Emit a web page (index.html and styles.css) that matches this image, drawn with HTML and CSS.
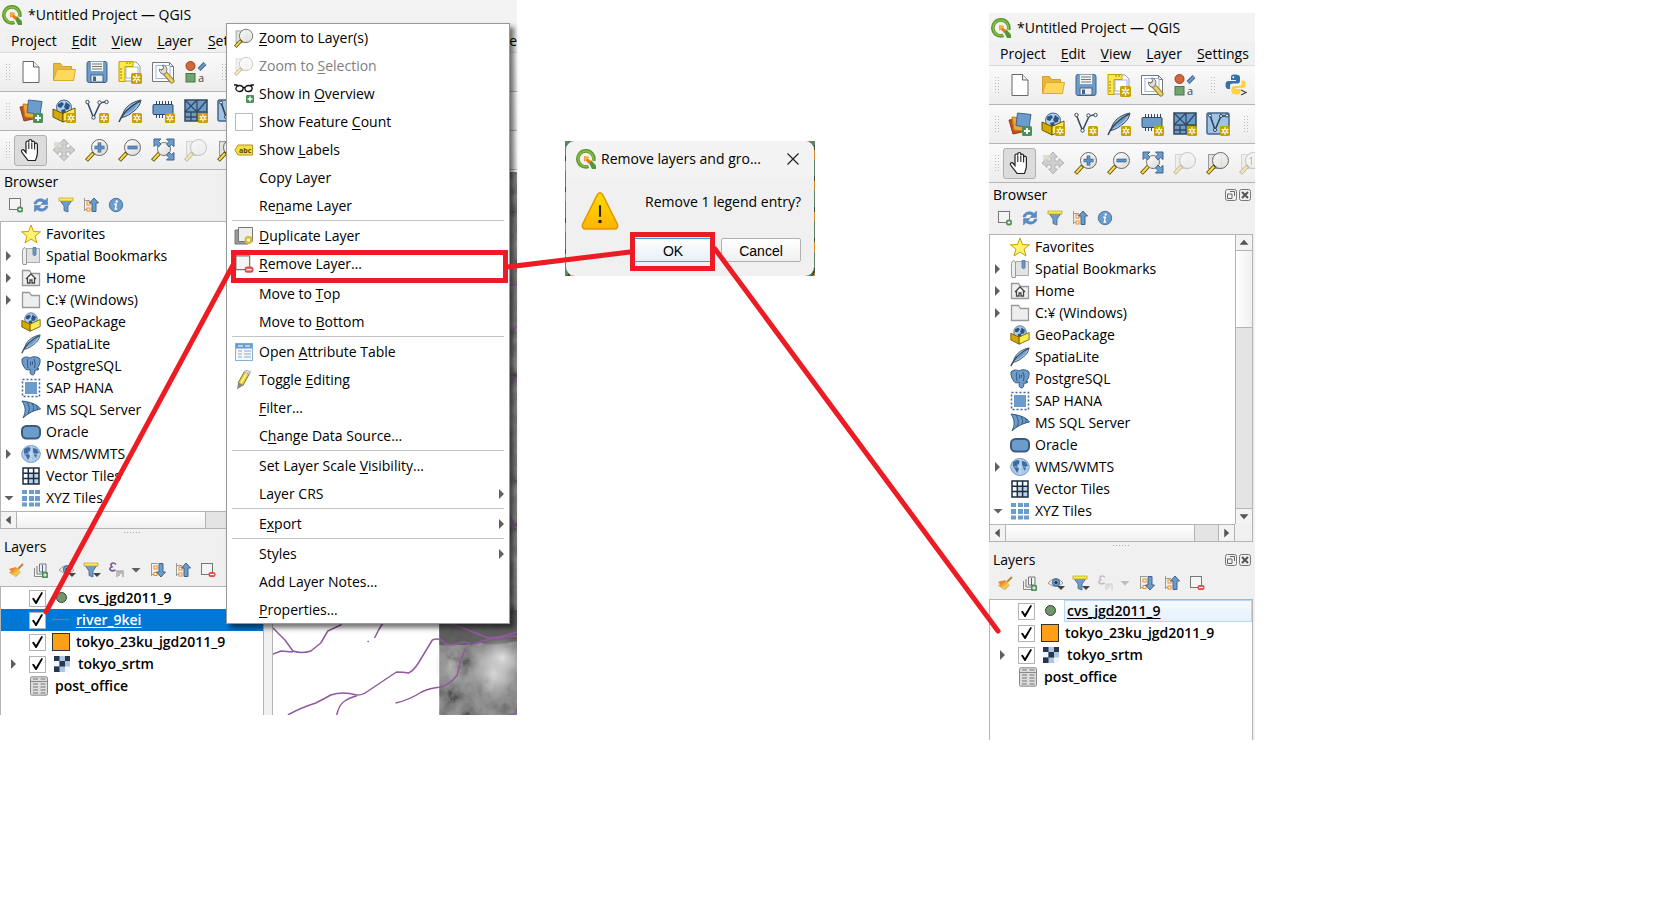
FILE: index.html
```html
<!DOCTYPE html>
<html lang="en">
<head>
<meta charset="utf-8">
<title>Removing a layer in QGIS</title>
<link rel="stylesheet" href="styles.css">
</head>
<body>
<svg class="sprite" aria-hidden="true">
  <defs>
    <linearGradient id="gold" x1="0" y1="0" x2="0" y2="1"><stop offset="0" stop-color="#ffdc00"/><stop offset="1" stop-color="#ffb300"/></linearGradient>
    <linearGradient id="lens" x1="0" y1="0" x2="1" y2="1"><stop offset="0" stop-color="#fff"/><stop offset="1" stop-color="#d8dad6"/></linearGradient>
    <linearGradient id="paint" x1="0" y1="0" x2="1" y2="1"><stop offset="0" stop-color="#e8503a"/><stop offset=".35" stop-color="#f0922e"/><stop offset=".65" stop-color="#f5cf4a"/><stop offset="1" stop-color="#5a8fd0"/></linearGradient>
  </defs>
  <symbol id="star-badge" viewBox="0 0 10 10"><rect width="10" height="10" rx="1.5" fill="#c8a000"/><path d="M5 1.2v7.6M1.7 3.1l6.6 3.8M8.3 3.1L1.7 6.900" stroke="#fff" stroke-width="1.300"/><circle cx="5" cy="5" r="1" fill="#c8a000"/></symbol>
  <symbol id="plus-badge" viewBox="0 0 10 10"><rect width="10" height="10" rx="1.500" fill="#4f8f5a"/><path d="M5 2v6M2 5h6" stroke="#fff" stroke-width="1.800"/></symbol>
  <symbol id="logo" viewBox="0 0 20 20"><path d="M12.500 17.400A8 8 0 1 1 17.600 11.800" fill="none" stroke="#589632" stroke-width="3.600"/><path d="M11.800 17.200A7.700 7.700 0 1 1 17.300 11.500" fill="none" stroke="#8cbe3c" stroke-width="1.600"/><path d="M12 12l3.500-.5 4.500 5V20h-4z" fill="#589632"/><path d="M8.200 7.200l5 .8-1.300 1.500 3.300 3-2.400 2.200-3-3.300-1.400 1.400z" fill="#ee7913"/><path d="M8.200 7.200l5 .8-3.900 4z" fill="#f5b041"/></symbol>
  <symbol id="doc" viewBox="0 0 24 24"><path d="M4 1.500h10.500L20 7v15.500H4z" fill="#fff" stroke="#666"/><path d="M14.500 1.500V7H20" fill="#eee" stroke="#666"/></symbol>
  <symbol id="open" viewBox="0 0 24 24"><path d="M1.500 20.500V3.500h7l2 3h9v3" fill="#e8b83c" stroke="#d0a028"/><path d="M1.500 20.500L5 9.500h18.500l-2 11z" fill="#ffd75a" stroke="#d8ab35"/></symbol>
  <symbol id="save" viewBox="0 0 24 24"><rect x="2" y="1.500" width="20" height="21" rx="2" fill="#6c9ccc" stroke="#41658c"/><rect x="5.500" y="1.500" width="13" height="10" fill="#f4f4f2" stroke="#85a0ba"/><path d="M7 4h10M7 6.500h10M7 9h10" stroke="#777"/><rect x="6" y="15" width="12" height="7" fill="#eee" stroke="#41658c"/><rect x="8" y="16.500" width="3" height="4.500" fill="#41658c"/></symbol>
  <symbol id="layout" viewBox="0 0 24 24"><path d="M2 2h16l4 4v15H2z" fill="#fff" stroke="#999"/><rect x="8" y="7" width="12" height="11" fill="none" stroke="#9ab6ec"/><path d="M1 1.500h14v5H7v15H1z" fill="#fce94f" stroke="#c4a000"/><path d="M9 4V2M12 4V2M4 9H2M4 12H2M4 15H2M4 18H2" stroke="#a38300"/><use href="#star-badge" x="13" y="13" width="11" height="11"/></symbol>
  <symbol id="wrench" viewBox="0 0 24 24"><path d="M1.500 2.500h17l4 4v15h-21z" fill="#fff" stroke="#777"/><path d="M18.500 2.500v4h4" fill="none" stroke="#777"/><rect x="5" y="5.500" width="14" height="13" fill="#fff" stroke="#9ab6ec"/><path d="M12 11l9 10" stroke="#9a8426" stroke-width="5" stroke-linecap="round"/><path d="M14 13l7 8" stroke="#e8d071" stroke-width="3" stroke-linecap="round"/><path d="M8.500 9a4.300 4.300 0 0 0 6 4.800l1-2.300A4.500 4.500 0 0 0 11.500 5l1.300 3.300-2 2z" fill="#ddd" stroke="#777"/></symbol>
  <symbol id="style" viewBox="0 0 24 24"><circle cx="6.500" cy="6" r="4.500" fill="#cf6a3c" stroke="#a33b18"/><path d="M15 9.500l6-6" stroke="#41658c" stroke-width="4"/><path d="M15 9.500l6-6" stroke="#6c9ccc" stroke-width="2"/><rect x="2" y="13.500" width="9" height="8.500" fill="#71a471" stroke="#4a754a"/><text x="14" y="22" class="glyph">a</text></symbol>
  <symbol id="python" viewBox="0 0 24 24"><path d="M11 1.500c-4 0-4 1.700-4 3v2.500h5v1H4.500C2 8 1.500 10 1.500 12s.8 4 2.800 4H6v-3c0-1.800 1-2.500 3-2.500h4.500c1.600 0 2.500-1 2.500-2.500V4.500c0-2-1.500-3-5-3z" fill="#3572a8"/><circle cx="9.300" cy="4.300" r="1" fill="#fff"/><path d="M12.500 21.500c4 0 4-1.700 4-3V16h-5v-1H19c2 0 2.800-1.500 2.800-4S21 7.500 19 7.500h-1.500v3c0 1.800-1 2.500-3 2.500H10c-1.600 0-2.500 1-2.500 2.500v3c0 2 1.500 3 5 3z" fill="#ffd040"/><path d="M17 17l5 2.500-5 2.500" fill="none" stroke="#444" stroke-width="1.300"/></symbol>
  <symbol id="source" viewBox="0 0 24 24"><path d="M1 8l8-1 5 13-9 2z" fill="#c0502a" stroke="#963a14"/><path d="M4 5l11 1v13l-9-1z" fill="#f0a830" stroke="#c07a10"/><path d="M9.500 1l13.500 1.500-2 13L8 13.500z" fill="#6c9ccc" stroke="#41658c"/><use href="#plus-badge" x="14" y="14" width="10" height="10"/></symbol>
  <symbol id="gpkg" viewBox="0 0 24 24"><circle cx="12" cy="8.500" r="7.500" fill="#b5d0ee" stroke="#41658c"/><path d="M6 5l4-2 2 2-3 4-3-1zM14 3l4 3-1 4-3 1-2-3zM9 11l4-1 1 4h-4z" fill="#2e5482"/><path d="M1 10l10 4.500v8.500L1 18z" fill="#d5a800" stroke="#6b5600"/><path d="M11 14.500L23 9v8.500L11 23z" fill="#fcec50" stroke="#6b5600"/></symbol>
  <symbol id="gpkg-new" viewBox="0 0 24 24"><use href="#gpkg"/><use href="#star-badge" x="14" y="14" width="10" height="10"/></symbol>
  <symbol id="vector" viewBox="0 0 24 24"><path d="M2.500 3.500l6 15L15 4.500q3-2 6-1.500" fill="none" stroke="#34495e" stroke-width="1.500"/><g fill="#fff" stroke="#34495e"><circle cx="2.500" cy="3" r="1.700"/><circle cx="8.500" cy="18.500" r="1.700"/><circle cx="14.500" cy="3.500" r="1.700"/><circle cx="21.500" cy="3" r="1.700"/></g><use href="#star-badge" x="14" y="14" width="10" height="10"/></symbol>
  <symbol id="feather" viewBox="0 0 24 24"><path d="M4 18.500C5 9 13 3 23 1c-1 5-3 8-7 11s-6 5-12 6.500z" fill="#9fc3e7" stroke="#34495e"/><path d="M1 23C4 15 11 8 22 2" fill="none" stroke="#34495e" stroke-width="1.500"/><path d="M7 16C10 11 15 7 20 4q-2 5-6 7.500t-7 4.500z" fill="#6c9ccc"/></symbol>
  <symbol id="feather-new" viewBox="0 0 24 24"><use href="#feather"/><use href="#star-badge" x="14" y="14" width="10" height="10"/></symbol>
  <symbol id="chip" viewBox="0 0 24 24"><path d="M5.500 2v17M8.500 2v17M11.500 2v17M14.500 2v17M17.500 2v17M20.500 2v17" stroke="#34495e"/><rect x="2" y="5.500" width="20" height="10" rx="1" fill="#6c9ccc" stroke="#34495e"/><use href="#star-badge" x="14" y="14" width="10" height="10"/></symbol>
  <symbol id="mesh" viewBox="0 0 24 24"><path d="M1 1h22v21H1z" fill="#6c9ccc" stroke="#34495e" stroke-width="1.500"/><path d="M1 13h22M13 1v21M1 1l12 12M13 1L1 13M23 1L13 13M7 13v9M1 18h12" fill="none" stroke="#34495e" stroke-width="1.300"/><use href="#star-badge" x="14" y="14" width="10" height="10"/></symbol>
  <symbol id="virtual" viewBox="0 0 24 24"><rect x="1" y="1" width="22" height="21" rx="1.500" fill="#9fc3e7" stroke="#41658c" stroke-width="1.500"/><path d="M4 3l5 15 6-14h6" fill="none" stroke="#2c3e50" stroke-width="1.500"/><g fill="#fff" stroke="#2c3e50"><circle cx="4" cy="3.500" r="1.500"/><circle cx="9" cy="18" r="1.500"/><circle cx="15" cy="4" r="1.500"/><circle cx="21" cy="3.500" r="1.500"/></g><use href="#star-badge" x="14" y="14" width="10" height="10"/></symbol>
  <symbol id="hand" viewBox="0 0 24 24"><path d="M9 22.500C7 19 3.500 16 2.500 13.500c-.5-1.800 1.500-2.500 2.800-1L7 14.500V4.500c0-2 2.800-2 2.800 0V3c0-2 3-2 3 0v1.500c0-2 2.800-1.700 2.800.3v1.500c.3-1.600 2.800-1.500 2.800.5V15c0 3-1 4.500-2 7.500z" fill="#fff" stroke="#222" stroke-width="1.200"/><path d="M9.800 5v6M12.800 5v6M15.600 6v5.500" stroke="#222" stroke-width="1.100"/></symbol>
  <symbol id="pan" viewBox="0 0 24 24"><path d="M12 1l4.500 5H14v4h4V7.500l5 4.500-5 4.500V14h-4v4h2.500L12 23l-4.500-5H10v-4H6v2.500L1 12l5-4.500V10h4V6H7.500z" fill="#cfcfcf" stroke="#b4b4b4"/><rect x="2" y="4" width="8" height="6" fill="#d5d3cb" opacity=".7"/></symbol>
  <symbol id="handle" viewBox="0 0 24 24"><path d="M1.500 22.500l7.500-8" stroke="#5f4c00" stroke-width="4"/><path d="M2 22l6-6.500" stroke="#fcd94f" stroke-width="2.200"/></symbol>
  <symbol id="zoomin" viewBox="0 0 24 24"><use href="#handle"/><circle cx="14.500" cy="9.500" r="8" fill="url(#lens)" stroke="#666"/><path d="M14.500 4.500v10M9.500 9.500h10" stroke="#41658c" stroke-width="3.600"/><path d="M14.500 5v9M10 9.500h9" stroke="#5f93cc" stroke-width="2"/></symbol>
  <symbol id="zoomout" viewBox="0 0 24 24"><use href="#handle"/><circle cx="14.500" cy="9.500" r="8" fill="url(#lens)" stroke="#666"/><path d="M9.500 9.500h10" stroke="#41658c" stroke-width="3.600"/><path d="M10 9.500h9" stroke="#5f93cc" stroke-width="2"/></symbol>
  <symbol id="zoomfull" viewBox="0 0 24 24"><use href="#handle"/><circle cx="13" cy="11" r="6.500" fill="url(#lens)" stroke="#777"/><path d="M3 1h7L7.500 3.500 10 6 7.500 9 5 6.500 3 8.500zM23 1v7.500l-2.500-2-2.500 2.500L15.500 6 18 3.500 15.500 1zM23 22h-7.500l2.500-2.500-2.500-2.500 2.500-3 2.500 2.500 2.500-2z" fill="#6c9ccc" stroke="#41658c"/></symbol>
  <symbol id="zoomlayer" viewBox="0 0 24 24"><rect x="2.500" y="3.500" width="13" height="14" fill="#e2e2de" stroke="#999"/><circle cx="14.500" cy="9.500" r="8" fill="url(#lens)" fill-opacity=".85" stroke="#666"/><use href="#handle"/></symbol>
  <symbol id="zoomnative" viewBox="0 0 24 24"><use href="#zoomlayer"/><text x="9" y="14" class="glyph">1:</text></symbol>
  <symbol id="add-item" viewBox="0 0 16 16"><rect x="1.500" y="1.500" width="11" height="11" fill="#f4f4f2" stroke="#777"/><rect x="9" y="9.500" width="6" height="6" rx="2.500" fill="#4f8f5a"/><path d="M12 11v3M10.500 12.500h3" stroke="#fff"/></symbol>
  <symbol id="refresh" viewBox="0 0 16 16"><path d="M1 7C1.500 2.500 8 0 12 3.500L14.500 1v6.500H8L10 5.300C7 3 4 4.500 3.500 7zM15 9c-.5 4.500-7 7-11 3.500L1.500 15V8.500H8L6 10.700c3 2.300 6 .8 6.500-1.700z" fill="#5b8cc6" stroke="#4678b0" stroke-width=".5"/></symbol>
  <symbol id="filter" viewBox="0 0 16 16"><path d="M1 2h14l-5 7v6l-4-1.500V9z" fill="#6c9ccc" stroke="#41658c" stroke-width=".8"/><rect x="1" y="1" width="14" height="3" fill="#fce94f" stroke="#b59b10" stroke-width=".6"/></symbol>
  <symbol id="collapse" viewBox="0 0 16 16"><path d="M1.500 1v13M2 3.500h5M2 12.500h5" stroke="#999"/><rect x="4" y="5" width="3" height="3" fill="#fff" stroke="#f08c1a"/><rect x="4" y="11" width="3" height="3" fill="#fff" stroke="#f08c1a"/><path d="M11 1l4.500 5H13v8.500H9V6H6.500z" fill="#6c9ccc" stroke="#41658c"/></symbol>
  <symbol id="expand" viewBox="0 0 16 16"><path d="M1.500 1v13M2 1.500h6M2 12.500h5" stroke="#999"/><rect x="4" y="4" width="3" height="3" fill="#fff" stroke="#f08c1a"/><rect x="4" y="10.500" width="3" height="3" fill="#fff" stroke="#f08c1a"/><path d="M11 15l4.500-5H13V1.500H9V10H6.500z" fill="#6c9ccc" stroke="#41658c"/></symbol>
  <symbol id="info" viewBox="0 0 16 16"><circle cx="8" cy="8" r="6.700" fill="#6c9ccc" stroke="#4a78ad"/><circle cx="8.700" cy="4.500" r="1.200" fill="#fff"/><path d="M6.300 7.300h2l-1 4.700h1.800" fill="none" stroke="#fff" stroke-width="1.400"/></symbol>
  <symbol id="brush" viewBox="0 0 16 16"><path d="M10 7l5-5" stroke="#b58a3a" stroke-width="2"/><path d="M1 7l7-2 5 5-5 5C4 14 4 11 1 11l2-2z" fill="url(#paint)"/></symbol>
  <symbol id="group" viewBox="0 0 16 16"><path d="M1.500 6v8.500h8" fill="none" stroke="#888"/><path d="M4 4v8h6M6.500 2h6.500v8H6.500z" fill="none" stroke="#777"/><path d="M9.500 12V3" stroke="#41658c"/><use href="#plus-badge" x="9" y="10" width="6" height="6"/></symbol>
  <symbol id="eye" viewBox="0 0 20 16"><path d="M1 8q8-9 15 0-7 7-15 0z" fill="#eee" stroke="#999"/><circle cx="9" cy="7.500" r="3.700" fill="#6c9ccc" stroke="#41658c"/><circle cx="9" cy="7.500" r="1.500" fill="#234"/><path d="M10 11h8l-4 4z" fill="#444"/></symbol>
  <symbol id="filter-menu" viewBox="0 0 20 16"><use href="#filter" width="16" height="16"/><path d="M10 11h8l-4 4z" fill="#444"/></symbol>
  <symbol id="epsilon" viewBox="0 0 16 16"><path d="M8 2.500C5-.5 1 2 4 4.800 0 6 2 10.500 7.500 8" fill="none" stroke="#765a86" stroke-width="1.600"/><path d="M9 15V9h6v6M11 9v5M13 9v3" fill="none" stroke="#999" stroke-width="1.200"/></symbol>
  <symbol id="remove-item" viewBox="0 0 16 16"><rect x="1.500" y="1.500" width="11" height="11" fill="#f4f4f2" stroke="#777"/><rect x="8.500" y="10" width="7" height="5" rx="2" fill="#e64b4b"/><path d="M10 12.500h4" stroke="#fff" stroke-width="1.200"/></symbol>
  <symbol id="float" viewBox="0 0 12 12"><rect x=".5" y=".5" width="11" height="11" rx="2" fill="none" stroke="#777"/><path d="M5 2.500h4.500V7M2.500 5H7v4.500H2.500z" fill="none" stroke="#666"/></symbol>
  <symbol id="close" viewBox="0 0 12 12"><rect x=".5" y=".5" width="11" height="11" rx="2" fill="none" stroke="#777"/><path d="M3 3l6 6M9 3l-6 6" stroke="#555" stroke-width="2"/></symbol>
  <symbol id="favorite" viewBox="0 0 20 20"><path d="M10 1l2.500 6.500 7 .3-5.500 4.400 2 6.800-6-4-6 4 2-6.800L.5 7.800l7-.3z" fill="#fff36e" stroke="#c8a000"/></symbol>
  <symbol id="bookmark" viewBox="0 0 20 20"><path d="M5.500 2.500h13v14h-13z" fill="#e2e2e2" stroke="#aaa"/><path d="M4 1.500q2 1 1.500 4v13H2q-.8-2-.5-14 .5-3 2.500-3z" fill="#eee" stroke="#999"/><path d="M12 1.500h3v7L13.500 10 12 8.500z" fill="#6c9ccc" stroke="#41658c" stroke-width=".7"/></symbol>
  <symbol id="folder" viewBox="0 0 20 20"><path d="M1.500 17.500v-15h7l2 3h8v12z" fill="#eee" stroke="#999" stroke-width="1.300"/></symbol>
  <symbol id="home" viewBox="0 0 20 20"><use href="#folder"/><path d="M5 11l5-5 5 5M6.500 10v5H9v-3h2v3h2.500v-5" fill="#fff" stroke="#444" stroke-width="1.300"/></symbol>
  <symbol id="postgres" viewBox="0 0 20 20"><path d="M1 3C4 0 7 1 9 2c3-2 8-1.500 10 1 .5 3-.5 7-3 9.500l2 .3c-1 1.500-3 1.500-4 1.200l-.3 3c-.5 2.500-4 2.500-4.500 0L9 13c-2 1.500-4 1-5-.5C2 10 .5 6 1 3z" fill="#6c9ccc" stroke="#34597e"/><path d="M7 3c-1 3-.5 6 0 9M13 3q2 4 .5 9" fill="none" stroke="#34597e"/><path d="M9.500 5.500v4M11.500 5.500v3" stroke="#34597e"/></symbol>
  <symbol id="hana" viewBox="0 0 20 20"><rect x="4" y="4" width="12" height="12" fill="#6c9ccc"/><rect x="1.500" y="1.500" width="17" height="17" fill="none" stroke="#41658c" stroke-width="1.500" stroke-dasharray="2 2"/></symbol>
  <symbol id="mssql" viewBox="0 0 20 20"><path d="M1 1c8 1 15 3 18.500 8C14 10 7 13 2 18c3-6 3-11-1-17z" fill="#6c9ccc" stroke="#34597e"/><path d="M6 2q4 6 1 12M11 3q3 5 1 8M15 5q2 3 1 5" fill="none" stroke="#34597e"/></symbol>
  <symbol id="oracle" viewBox="0 0 20 20"><rect x="1" y="4" width="18" height="12.500" rx="4.500" fill="#6c9ccc" stroke="#3d5a7a" stroke-width="2"/></symbol>
  <symbol id="globe" viewBox="0 0 20 20"><ellipse cx="10" cy="10" rx="9.300" ry="8.500" fill="#a9c8ea" stroke="#7c9cc0"/><path d="M3 5l4-2 3 1-1 3-2 1 1 2 1 2-2 4-2-4-2-2zM12 4l4 1 2 4-2 1-1 4-2-3-1-4z" fill="#3f6c9e"/><path d="M10 1.500v17M1 10h18" stroke="#dceafa" stroke-width=".6"/></symbol>
  <symbol id="grid" viewBox="0 0 20 20"><path d="M2 2h16v16H2z" fill="#fff"/><path d="M7 7h11v11H7z" fill="#b9d2ec"/><path d="M2 2h16v16H2zM7.300 2v16M12.600 2v16M2 7.300h16M2 12.600h16" fill="none" stroke="#1d2c3e" stroke-width="1.500"/></symbol>
  <symbol id="xyz" viewBox="0 0 20 20"><path d="M1 2h5v4H1zM8 2h5v4H8zM14 2h5v4h-5zM1 8h5v5H1zM8 8h5v5H8zM14 8h5v5h-5zM1 14.500h5v4H1zM8 14.500h5v4H8zM14 14.500h5v4h-5z" fill="#6c9ccc"/></symbol>
  <symbol id="point" viewBox="0 0 20 20"><circle cx="10.500" cy="9.500" r="5" fill="#71966b" stroke="#35452f"/></symbol>
  <symbol id="line" viewBox="0 0 20 20"><path d="M1 9.500h18" stroke="#7c6cb8" stroke-width="1.300"/></symbol>
  <symbol id="polygon" viewBox="0 0 20 20"><rect x="1.500" y="1.500" width="17" height="17" fill="#ff9e17" stroke="#333"/></symbol>
  <symbol id="raster" viewBox="0 0 20 20"><path d="M3 2h16v16H3z" fill="#abc6e4"/><path d="M3 2h5.500v5H3zM14 2h5v5h-5zM8.500 7H14v5.500H8.500zM3 12.500h5.500V18H3z" fill="#26374b"/><path d="M14 12.500h5V18h-5zM3 7h5v5H3z" fill="#f2f6fb"/></symbol>
  <symbol id="table" viewBox="0 0 20 20"><rect x="1.500" y=".8" width="17" height="18.400" rx="1.500" fill="#ddd" stroke="#888"/><path d="M2 5.500h16" stroke="#888"/><path d="M4 3h5M11.500 3h5M4 8h5M11.500 8h5M4 11h5M11.500 11h5M4 14h5M11.500 14h5M4 17h5M11.500 17h5" stroke="#777" stroke-width="1.200"/></symbol>
  <symbol id="glasses" viewBox="0 0 20 20"><path d="M0 1h2.500l2 1M9 3.500h2M20 1h-2.500l-2 1" fill="none" stroke="#111" stroke-width="1.500"/><ellipse cx="5.500" cy="4.500" rx="3.600" ry="3" fill="#fff" stroke="#111" stroke-width="1.300"/><ellipse cx="14.500" cy="4.500" rx="3.600" ry="3" fill="#fff" stroke="#111" stroke-width="1.300"/><use href="#plus-badge" x="12" y="11" width="8" height="8"/></symbol>
  <symbol id="tag" viewBox="0 0 20 20"><path d="M1 10l3-5h14.500v10H4z" fill="#f8df40" stroke="#b59610"/><text x="5" y="13" class="tiny-glyph">abc</text></symbol>
  <symbol id="duplicate" viewBox="0 0 20 20"><path d="M1 4h13v14H1z" fill="#999" stroke="#777"/><path d="M4.500 1.500h14v14h-14z" fill="#eee" stroke="#777"/><circle cx="14.500" cy="14" r="4" fill="#d4b93c"/><circle cx="14.500" cy="14" r="1.700" fill="#fff7c8"/></symbol>
  <symbol id="attributes" viewBox="0 0 20 20"><rect x="1.500" y="1.500" width="17" height="17" fill="#f3f8fd" stroke="#87b2dc"/><path d="M1.500 1.500h17v5h-17z" fill="#6c9ccc"/><path d="M4 4h5M11 4h5" stroke="#cfe3f7" stroke-width="1.500"/><path d="M4 9h4M10 9h7M4 12h4M10 12h7M4 15h4M10 15h7" stroke="#8fa5bb"/></symbol>
  <symbol id="pencil" viewBox="0 0 20 20"><path d="M4 13l6.500-11.500 5 2L9 15.500z" fill="#e5cb3a" stroke="#8c7a1a"/><path d="M10.500 1l1-.8 5 1.500-1.200 2.600-5-2z" fill="#ddd" stroke="#aaa"/><path d="M7 13l5.500-9.500" stroke="#fff4a8" stroke-width="1.500"/><path d="M3 19.500l1-6.500 5 2.500z" fill="#888"/></symbol>
  <symbol id="warning" viewBox="0 0 36 36"><path d="M15.500 2.500q2.500-3.500 5 0l14 28q1.200 4.500-3 4.500h-27q-4.200 0-3-4.500z" fill="url(#gold)" stroke="#e09a00" stroke-width="1.500"/><path d="M18 12.500v11" stroke="#222" stroke-width="2"/><circle cx="18" cy="28" r="1.700" fill="#222"/></symbol>
</svg>

<main class="canvas">
  <section class="window window-before" aria-label="QGIS before removal">
    <header class="titlebar"><svg class="i20"><use href="#logo"/></svg><span>*Untitled Project — QGIS</span></header>
    <nav class="menubar"><a href="#">Pro<u>j</u>ect</a><a href="#"><u>E</u>dit</a><a href="#"><u>V</u>iew</a><a href="#"><u>L</u>ayer</a><a href="#"><u>S</u>ettings</a><a href="#" class="push">e</a></nav>
    <div class="toolbar"><i class="grip"></i><button aria-label="New"><svg><use href="#doc"/></svg></button><button aria-label="Open"><svg><use href="#open"/></svg></button><button aria-label="Save"><svg><use href="#save"/></svg></button><button aria-label="New layout"><svg><use href="#layout"/></svg></button><button aria-label="Layout manager"><svg><use href="#wrench"/></svg></button><button aria-label="Style manager"><svg><use href="#style"/></svg></button><i class="grip grip-mid"></i></div>
    <div class="toolbar"><i class="grip"></i><button aria-label="Data source"><svg><use href="#source"/></svg></button><button aria-label="New GeoPackage"><svg><use href="#gpkg-new"/></svg></button><button aria-label="New shapefile"><svg><use href="#vector"/></svg></button><button aria-label="New SpatiaLite"><svg><use href="#feather-new"/></svg></button><button aria-label="Scratch layer"><svg><use href="#chip"/></svg></button><button aria-label="New mesh"><svg><use href="#mesh"/></svg></button><button aria-label="Virtual layer"><svg><use href="#virtual"/></svg></button></div>
    <div class="toolbar"><i class="grip"></i><button class="pressed" aria-label="Pan"><svg><use href="#hand"/></svg></button><button aria-label="Pan to selection"><svg><use href="#pan"/></svg></button><button aria-label="Zoom in"><svg><use href="#zoomin"/></svg></button><button aria-label="Zoom out"><svg><use href="#zoomout"/></svg></button><button aria-label="Zoom full"><svg><use href="#zoomfull"/></svg></button><button class="faded" aria-label="Zoom to selection"><svg><use href="#zoomlayer"/></svg></button><button aria-label="Zoom to layer"><svg><use href="#zoomlayer"/></svg></button></div>
    <div class="workspace">
      <div class="docks">
        <h2 class="dock-title">Browser</h2>
        <div class="dock-tools"><button aria-label="Add"><svg><use href="#add-item"/></svg></button><button aria-label="Refresh"><svg><use href="#refresh"/></svg></button><button aria-label="Filter"><svg><use href="#filter"/></svg></button><button aria-label="Collapse all"><svg><use href="#collapse"/></svg></button><button aria-label="Properties"><svg><use href="#info"/></svg></button></div>
        <div class="browser-box">
          <ul class="tree">
            <li><i></i><svg><use href="#favorite"/></svg>Favorites</li>
            <li><i class="closed"></i><svg><use href="#bookmark"/></svg>Spatial Bookmarks</li>
            <li><i class="closed"></i><svg><use href="#home"/></svg>Home</li>
            <li><i class="closed"></i><svg><use href="#folder"/></svg>C:¥ (Windows)</li>
            <li><i></i><svg><use href="#gpkg"/></svg>GeoPackage</li>
            <li><i></i><svg><use href="#feather"/></svg>SpatiaLite</li>
            <li><i></i><svg><use href="#postgres"/></svg>PostgreSQL</li>
            <li><i></i><svg><use href="#hana"/></svg>SAP HANA</li>
            <li><i></i><svg><use href="#mssql"/></svg>MS SQL Server</li>
            <li><i></i><svg><use href="#oracle"/></svg>Oracle</li>
            <li><i class="closed"></i><svg><use href="#globe"/></svg>WMS/WMTS</li>
            <li><i></i><svg><use href="#grid"/></svg>Vector Tiles</li>
            <li><i class="opened"></i><svg><use href="#xyz"/></svg>XYZ Tiles</li>
            <li class="child"><i></i><svg><use href="#xyz"/></svg></li>
          </ul>
          <div class="vscroll"><button class="up" aria-label="Scroll up"></button><span></span><button class="down" aria-label="Scroll down"></button></div>
          <div class="hscroll"><button class="left" aria-label="Scroll left"></button><span></span><button class="right" aria-label="Scroll right"></button></div>
        </div>
        <div class="splitter"></div>
        <h2 class="dock-title">Layers</h2>
        <div class="dock-tools"><button aria-label="Styling"><svg><use href="#brush"/></svg></button><button aria-label="Add group"><svg><use href="#group"/></svg></button><button aria-label="Themes"><svg class="wide"><use href="#eye"/></svg></button><button aria-label="Filter legend"><svg class="wide"><use href="#filter-menu"/></svg></button><button aria-label="Filter by expression"><svg><use href="#epsilon"/></svg></button><button class="narrow" aria-label="Expression options"><i class="opened"></i></button><button aria-label="Expand all"><svg><use href="#expand"/></svg></button><button aria-label="Collapse all"><svg><use href="#collapse"/></svg></button><button aria-label="Remove layer"><svg><use href="#remove-item"/></svg></button></div>
        <ul class="tree layers">
          <li><i></i><label><input type="checkbox" checked><svg><use href="#point"/></svg><span class="inset">cvs_jgd2011_9</span></label></li>
          <li class="selected"><i></i><label><input type="checkbox" checked><svg><use href="#line"/></svg><span><u>river_9kei</u></span></label></li>
          <li><i></i><label><input type="checkbox" checked><svg><use href="#polygon"/></svg><span>tokyo_23ku_jgd2011_9</span></label></li>
          <li><i class="closed"></i><label><input type="checkbox" checked><svg><use href="#raster"/></svg><span class="inset">tokyo_srtm</span></label></li>
          <li><i></i><svg class="table-icon"><use href="#table"/></svg><span>post_office</span></li>
        </ul>
      </div>
      <svg class="map" viewBox="0 0 245 545" preserveAspectRatio="none" role="img" aria-label="Map canvas">
        <defs>
          <filter id="terrain" x="0" y="0" width="1" height="1"><feTurbulence type="fractalNoise" baseFrequency=".07 .06" numOctaves="5" seed="8"/><feColorMatrix values="1.6 0 0 0 -.35  1.6 0 0 0 -.35  1.6 0 0 0 -.35  0 0 0 0 1"/></filter>
          <radialGradient id="glow"><stop offset="0" stop-color="#eee" stop-opacity=".85"/><stop offset="1" stop-color="#aaa" stop-opacity="0"/></radialGradient>
        </defs>
        <rect width="245" height="545" fill="#fff"/>
        <rect x="167" y="2" width="78" height="543" fill="#747474"/>
        <rect x="167" y="2" width="78" height="543" filter="url(#terrain)" opacity=".28"/>
        <path d="M167 440h78v31q-25 6-35 2-22 3-43 2z" fill="#505050" opacity=".75"/>
        <ellipse cx="222" cy="503" rx="34" ry="38" fill="url(#glow)"/>
        <ellipse cx="230" cy="488" rx="26" ry="22" fill="url(#glow)"/>
        <ellipse cx="178" cy="495" rx="16" ry="24" fill="url(#glow)" opacity=".6"/>
        <g class="rivers"><path d="M0 458l12 12 8 11q9 3 18 0l10-8 7-12 13-6 4-10M0 484l8-3 12 1M15 545q12-7 28-12 8-4 15-8 12-4 26 0 6 0 10-3l30-20q7 0 12 1 5-2 10-10l14-23q8-3 13 4 8 2 18-2 5 0 8 3 15-7 46-9M64 545q2-10 8-14 4-3 12-5M123 533q14-3 26-11 8-4 20-5 9-3 16-12 3-15 8-26M174 452l22 8 20 8q15-1 29-6M102 468l4-8 5-8M95 471l1 1M237 545l8-2M236 115h9M236 162l4-1 5-5M236 217l9-9M237 342l3 10 5 6"/></g>
      </svg>
    </div>
  </section>

  <div class="context-menu" role="menu">
    <button role="menuitem"><svg><use href="#zoomlayer"/></svg><span><u>Z</u>oom to Layer(s)</span></button>
    <button role="menuitem" disabled><svg><use href="#zoomlayer"/></svg><span>Zoom to <u>S</u>election</span></button>
    <button role="menuitem"><svg><use href="#glasses"/></svg><span>Show in <u>O</u>verview</span></button>
    <button role="menuitemcheckbox" aria-checked="false"><i class="box"></i><span>Show Feature <u>C</u>ount</span></button>
    <button role="menuitem"><svg><use href="#tag"/></svg><span>Show <u>L</u>abels</span></button>
    <button role="menuitem"><i></i><span>Copy Layer</span></button>
    <button role="menuitem"><i></i><span>Re<u>n</u>ame Layer</span></button>
    <hr>
    <button role="menuitem"><svg><use href="#duplicate"/></svg><span><u>D</u>uplicate Layer</span></button>
    <button role="menuitem"><svg><use href="#remove-item"/></svg><span><u>R</u>emove Layer…</span></button>
    <hr>
    <button role="menuitem"><i></i><span>Move to <u>T</u>op</span></button>
    <button role="menuitem"><i></i><span>Move to <u>B</u>ottom</span></button>
    <hr>
    <button role="menuitem"><svg><use href="#attributes"/></svg><span>Open <u>A</u>ttribute Table</span></button>
    <button role="menuitem"><svg><use href="#pencil"/></svg><span>Toggle <u>E</u>diting</span></button>
    <button role="menuitem"><i></i><span><u>F</u>ilter…</span></button>
    <button role="menuitem"><i></i><span>C<u>h</u>ange Data Source…</span></button>
    <hr>
    <button role="menuitem"><i></i><span>Set Layer Scale <u>V</u>isibility…</span></button>
    <button role="menuitem" class="submenu"><i></i><span>Layer CRS</span></button>
    <hr>
    <button role="menuitem" class="submenu"><i></i><span>E<u>x</u>port</span></button>
    <hr>
    <button role="menuitem" class="submenu"><i></i><span>Styles</span></button>
    <button role="menuitem"><i></i><span>Add Layer Notes…</span></button>
    <button role="menuitem"><i></i><span><u>P</u>roperties…</span></button>
  </div>

  <div class="backdrop">
    <section class="dialog" role="dialog" aria-label="Remove layers and groups">
      <header><svg class="i20"><use href="#logo"/></svg><span>Remove layers and gro...</span><button aria-label="Close"><svg viewBox="0 0 12 12"><path d="M.5.5l11 11M11.500.5l-11 11" stroke="#222" stroke-width="1.200"/></svg></button></header>
      <div class="dialog-body"><svg class="warning"><use href="#warning"/></svg><p>Remove 1 legend entry?</p></div>
      <footer><button class="default">OK</button><button>Cancel</button></footer>
    </section>
  </div>

  <section class="window window-after" aria-label="QGIS after removal">
    <header class="titlebar"><svg class="i20"><use href="#logo"/></svg><span>*Untitled Project — QGIS</span></header>
    <nav class="menubar"><a href="#">Pro<u>j</u>ect</a><a href="#"><u>E</u>dit</a><a href="#"><u>V</u>iew</a><a href="#"><u>L</u>ayer</a><a href="#"><u>S</u>ettings</a></nav>
    <div class="toolbar"><i class="grip"></i><button aria-label="New"><svg><use href="#doc"/></svg></button><button aria-label="Open"><svg><use href="#open"/></svg></button><button aria-label="Save"><svg><use href="#save"/></svg></button><button aria-label="New layout"><svg><use href="#layout"/></svg></button><button aria-label="Layout manager"><svg><use href="#wrench"/></svg></button><button aria-label="Style manager"><svg><use href="#style"/></svg></button><i class="grip grip-mid"></i><button aria-label="Python console"><svg><use href="#python"/></svg></button></div>
    <div class="toolbar"><i class="grip"></i><button aria-label="Data source"><svg><use href="#source"/></svg></button><button aria-label="New GeoPackage"><svg><use href="#gpkg-new"/></svg></button><button aria-label="New shapefile"><svg><use href="#vector"/></svg></button><button aria-label="New SpatiaLite"><svg><use href="#feather-new"/></svg></button><button aria-label="Scratch layer"><svg><use href="#chip"/></svg></button><button aria-label="New mesh"><svg><use href="#mesh"/></svg></button><button aria-label="Virtual layer"><svg><use href="#virtual"/></svg></button><i class="grip grip-mid"></i></div>
    <div class="toolbar"><i class="grip"></i><button class="pressed" aria-label="Pan"><svg><use href="#hand"/></svg></button><button aria-label="Pan to selection"><svg><use href="#pan"/></svg></button><button aria-label="Zoom in"><svg><use href="#zoomin"/></svg></button><button aria-label="Zoom out"><svg><use href="#zoomout"/></svg></button><button aria-label="Zoom full"><svg><use href="#zoomfull"/></svg></button><button class="faded" aria-label="Zoom to selection"><svg><use href="#zoomlayer"/></svg></button><button aria-label="Zoom to layer"><svg><use href="#zoomlayer"/></svg></button><button class="faded" aria-label="Zoom native"><svg><use href="#zoomnative"/></svg></button></div>
    <div class="workspace">
      <div class="docks">
        <h2 class="dock-title">Browser<button aria-label="Float"><svg><use href="#float"/></svg></button><button aria-label="Close"><svg><use href="#close"/></svg></button></h2>
        <div class="dock-tools"><button aria-label="Add"><svg><use href="#add-item"/></svg></button><button aria-label="Refresh"><svg><use href="#refresh"/></svg></button><button aria-label="Filter"><svg><use href="#filter"/></svg></button><button aria-label="Collapse all"><svg><use href="#collapse"/></svg></button><button aria-label="Properties"><svg><use href="#info"/></svg></button></div>
        <div class="browser-box">
          <ul class="tree">
            <li><i></i><svg><use href="#favorite"/></svg>Favorites</li>
            <li><i class="closed"></i><svg><use href="#bookmark"/></svg>Spatial Bookmarks</li>
            <li><i class="closed"></i><svg><use href="#home"/></svg>Home</li>
            <li><i class="closed"></i><svg><use href="#folder"/></svg>C:¥ (Windows)</li>
            <li><i></i><svg><use href="#gpkg"/></svg>GeoPackage</li>
            <li><i></i><svg><use href="#feather"/></svg>SpatiaLite</li>
            <li><i></i><svg><use href="#postgres"/></svg>PostgreSQL</li>
            <li><i></i><svg><use href="#hana"/></svg>SAP HANA</li>
            <li><i></i><svg><use href="#mssql"/></svg>MS SQL Server</li>
            <li><i></i><svg><use href="#oracle"/></svg>Oracle</li>
            <li><i class="closed"></i><svg><use href="#globe"/></svg>WMS/WMTS</li>
            <li><i></i><svg><use href="#grid"/></svg>Vector Tiles</li>
            <li><i class="opened"></i><svg><use href="#xyz"/></svg>XYZ Tiles</li>
            <li class="child"><i></i><svg><use href="#xyz"/></svg></li>
          </ul>
          <div class="vscroll"><button class="up" aria-label="Scroll up"></button><span></span><button class="down" aria-label="Scroll down"></button></div>
          <div class="hscroll"><button class="left" aria-label="Scroll left"></button><span></span><button class="right" aria-label="Scroll right"></button></div>
        </div>
        <div class="splitter"></div>
        <h2 class="dock-title">Layers<button aria-label="Float"><svg><use href="#float"/></svg></button><button aria-label="Close"><svg><use href="#close"/></svg></button></h2>
        <div class="dock-tools"><button aria-label="Styling"><svg><use href="#brush"/></svg></button><button aria-label="Add group"><svg><use href="#group"/></svg></button><button aria-label="Themes"><svg class="wide"><use href="#eye"/></svg></button><button aria-label="Filter legend"><svg class="wide"><use href="#filter-menu"/></svg></button><button class="faded" aria-label="Filter by expression"><svg><use href="#epsilon"/></svg></button><button class="narrow faded" aria-label="Expression options"><i class="opened"></i></button><button aria-label="Expand all"><svg><use href="#expand"/></svg></button><button aria-label="Collapse all"><svg><use href="#collapse"/></svg></button><button aria-label="Remove layer"><svg><use href="#remove-item"/></svg></button></div>
        <ul class="tree layers">
          <li><i></i><label class="hovered"><input type="checkbox" checked><svg><use href="#point"/></svg><span class="inset"><u>cvs_jgd2011_9</u></span></label></li>
          <li><i></i><label><input type="checkbox" checked><svg><use href="#polygon"/></svg><span>tokyo_23ku_jgd2011_9</span></label></li>
          <li><i class="closed"></i><label><input type="checkbox" checked><svg><use href="#raster"/></svg><span class="inset">tokyo_srtm</span></label></li>
          <li><i></i><svg class="table-icon"><use href="#table"/></svg><span>post_office</span></li>
        </ul>
      </div>
    </div>
  </section>

  <svg class="annotations" aria-hidden="true">
    <path d="M233.500 252.500h272v28h-272zM632.500 234.500h80v34h-80z"/>
    <path d="M46 612L233 265M507 267l123-15M715 249L998 631" stroke-linecap="round"/>
  </svg>
</main>
</body>
</html>
```
FILE: styles.css
```css
* { box-sizing: border-box; }
body { margin: 0; background: #fff; color: #000; font: 14px/22px "Open Sans", "Noto Sans", sans-serif; }
button { margin: 0; padding: 0; border: 0; background: none; color: inherit; font: inherit; }
ul { margin: 0; padding: 0; list-style: none; }
u { text-underline-offset: 2px; }
.sprite { position: absolute; width: 0; height: 0; }
.glyph { font: 11px "Open Sans", sans-serif; fill: #444; }
.tiny-glyph { font: bold 7px "Open Sans", sans-serif; fill: #554800; }
.i20 { width: 20px; height: 20px; flex: none; }

.canvas { position: relative; min-height: 100vh; overflow: hidden; }
.window { position: absolute; display: flex; flex-direction: column; background: #f0f0f0; overflow: hidden; }
.window-before { left: 0; top: 0; width: 517px; height: 715px; }
.window-after { left: 989px; top: 13px; width: 266px; height: 727px; }

.titlebar { display: flex; align-items: center; gap: 6px; height: 29px; padding-left: 2px; background: #f3f3f3; flex: none; }
.menubar { display: flex; align-items: center; gap: 15px; height: 24px; padding-left: 11px; flex: none; border-bottom: 1px solid #dadada; }
.menubar a { color: inherit; text-decoration: none; }
.menubar .push { margin-left: auto; }

.toolbar { display: flex; align-items: center; height: 39px; padding-left: 5px; flex: none; background: linear-gradient(#fafafa, #ededed); border-bottom: 1px solid #b4b4b4; overflow: hidden; }
.toolbar button { display: grid; place-items: center; width: 33px; height: 31px; flex: none; }
.toolbar svg { width: 24px; height: 24px; }
.toolbar .pressed { background: #dcdcdc; border: 1px solid #b0b0b0; border-radius: 3px; }
.grip { width: 6px; height: 18px; margin-right: 3px; flex: none; background: radial-gradient(circle, #bbb 1px, transparent 1px) 0 0 / 3px 3px; }
.grip-mid { margin-left: 9px; }
.faded { opacity: .35; }

.workspace { display: flex; flex: 1; min-height: 0; }
.docks { display: flex; flex-direction: column; width: 264px; flex: none; }
.dock-title { display: flex; align-items: center; gap: 2px; height: 24px; margin: 0; padding: 0 2px 0 4px; font-size: 14px; font-weight: 400; flex: none; }
.dock-title button { display: grid; width: 12px; height: 12px; }
.dock-title button:first-of-type { margin-left: auto; }
.dock-title svg { width: 12px; height: 12px; }
.dock-tools { display: flex; align-items: center; height: 22px; margin-bottom: 5px; padding-left: 3px; flex: none; }
.dock-tools button { display: grid; place-items: center start; width: 25px; height: 22px; padding-left: 5px; }
.dock-tools svg { width: 16px; height: 16px; }
.dock-tools .wide { width: 20px; }
.dock-tools .narrow { width: 17px; padding-left: 3px; }

.browser-box { display: grid; grid-template: 289px 17px / 1fr 17px; border: 1px solid #b4b4b4; flex: none; }
.tree { background: #fff; overflow: hidden; white-space: nowrap; }
.tree li { display: flex; align-items: center; height: 22px; }
.browser-box .tree { padding-top: 1px; }
.tree li > i { width: 20px; flex: none; }
.tree li > svg { width: 20px; height: 20px; margin-right: 5px; flex: none; }
.tree .child { padding-left: 16px; }
.closed::before, .submenu::after { content: ""; display: block; width: 5px; height: 10px; margin-left: 5px; background: #606060; clip-path: polygon(0 0, 100% 50%, 0 100%); }
.opened::before { content: ""; display: block; width: 10px; height: 5px; margin-left: 3px; background: #606060; clip-path: polygon(0 0, 100% 0, 50% 100%); }
.dock-tools .opened::before { margin: 0; }

.vscroll { display: flex; flex-direction: column; border-left: 1px solid #b4b4b4; background: #e4e4e4; }
.vscroll span { height: 77px; background: linear-gradient(90deg, #fff, #f0f0f0); border-bottom: 1px solid #b4b4b4; }
.hscroll { display: flex; grid-column: 1; border-top: 1px solid #b4b4b4; border-right: 1px solid #b4b4b4; background: #e4e4e4; }
.hscroll span { width: 189px; background: linear-gradient(#fff, #f0f0f0); border-right: 1px solid #b4b4b4; }
.vscroll button, .hscroll button { display: grid; place-items: center; width: 16px; height: 16px; background: #f3f3f3; }
.vscroll .up { border-bottom: 1px solid #b4b4b4; }
.vscroll .down { margin-top: auto; border-top: 1px solid #b4b4b4; }
.hscroll .left { border-right: 1px solid #b4b4b4; }
.hscroll .right { margin-left: auto; border-left: 1px solid #b4b4b4; }
.vscroll button::before, .hscroll button::before { content: ""; width: 9px; height: 9px; background: #555; }
.vscroll .up::before { clip-path: polygon(0 75%, 50% 20%, 100% 75%); }
.vscroll .down::before { clip-path: polygon(0 25%, 50% 80%, 100% 25%); }
.hscroll .left::before { clip-path: polygon(75% 0, 20% 50%, 75% 100%); }
.hscroll .right::before { clip-path: polygon(25% 0, 80% 50%, 25% 100%); }
.splitter { width: 18px; height: 6px; margin: 0 auto; flex: none; background: radial-gradient(circle, #aaa 1px, transparent 1px) 0 center / 3px 3px repeat-x; }

.layers { flex: 1; border: 1px solid #b4b4b4; border-bottom: 0; font-weight: 600; }
.layers li > i { width: 28px; }
.layers .closed::before { margin-left: 10px; }
.layers label { display: flex; align-items: center; flex: 1; height: 22px; }
.layers label svg { width: 20px; height: 20px; margin: 0 4px 0 5px; flex: none; }
.layers input { appearance: none; display: grid; place-items: center; width: 17px; height: 17px; margin: 0; background: #fff; border: 1px solid #b4b4b4; }
.layers input:checked::before { content: ""; width: 11px; height: 12px; background: #000; clip-path: polygon(0 55%, 16% 48%, 36% 74%, 86% 0, 100% 6%, 42% 100%, 32% 100%); }
.layers span { flex: 1; padding-left: 1px; }
.layers .inset { padding-left: 3px; }
.layers .selected { background: #0078d7; color: #fff; }
.layers .hovered span { background: linear-gradient(#f6fafe, #e4f1fc); box-shadow: 0 0 0 1px #b5d8f5 inset; }

.map { flex: 1; min-width: 0; height: 100%; margin-left: 8px; border-left: 1px solid #b4b4b4; }
.rivers { fill: none; stroke: #8f5a9e; stroke-width: 1.5; stroke-linejoin: round; }

.context-menu { position: absolute; left: 226px; top: 23px; width: 284px; background: #fff; border: 1px solid #999; box-shadow: 4px 4px 5px rgba(0, 0, 0, .55); }
.context-menu button { display: flex; align-items: center; width: 100%; height: 28px; padding: 0 5px 0 7px; text-align: left; }
.context-menu button:last-child { height: 27px; }
.context-menu hr { height: 2px; margin: 0 5px; border: 0; border-top: 1px solid #c4c4c4; }
.context-menu svg { width: 20px; height: 20px; margin-right: 5px; }
.context-menu i { width: 18px; height: 18px; margin: 0 6px 0 1px; }
.context-menu .box { border: 1px solid #bbb; }
.context-menu button:disabled { color: #808080; }
.context-menu button:disabled svg { opacity: .4; }
.context-menu .submenu::after { margin-left: auto; }

.backdrop { position: absolute; left: 565px; top: 141px; width: 250px; background: repeating-linear-gradient(115deg, #5d8468 0 7px, #3c4a3a 7px 9px, #d98b2b 9px 13px); }
.dialog { margin: 0 1px; background: #f0f0f0; border-radius: 9px; overflow: hidden; }
.dialog header { display: flex; align-items: center; gap: 5px; height: 36px; padding: 0 15px 0 10px; background: #f3f3f3; }
.dialog header button { display: grid; place-items: center; width: 12px; height: 22px; margin-left: auto; }
.dialog header button svg { width: 12px; height: 12px; }
.dialog-body { display: flex; justify-content: space-between; height: 61px; padding: 14px 13px 0 15px; }
.dialog-body p { margin: 0; }
.warning { width: 38px; height: 38px; margin-top: 1px; }
.dialog footer { display: flex; justify-content: flex-end; gap: 8px; padding: 0 13px 14px 0; }
.dialog footer button { width: 80px; height: 24px; background: linear-gradient(#fff, #f0f0f0); border: 1px solid #b0b0b0; border-radius: 2px; font: 14px/24px "Liberation Sans", sans-serif; }
.dialog footer .default { background: linear-gradient(#fff, #e6eff8); border-color: #3c9cf0; }

.annotations { position: absolute; left: 0; top: 0; width: 100%; height: 100%; pointer-events: none; fill: none; stroke: #ed1c24; stroke-width: 5; }
```
